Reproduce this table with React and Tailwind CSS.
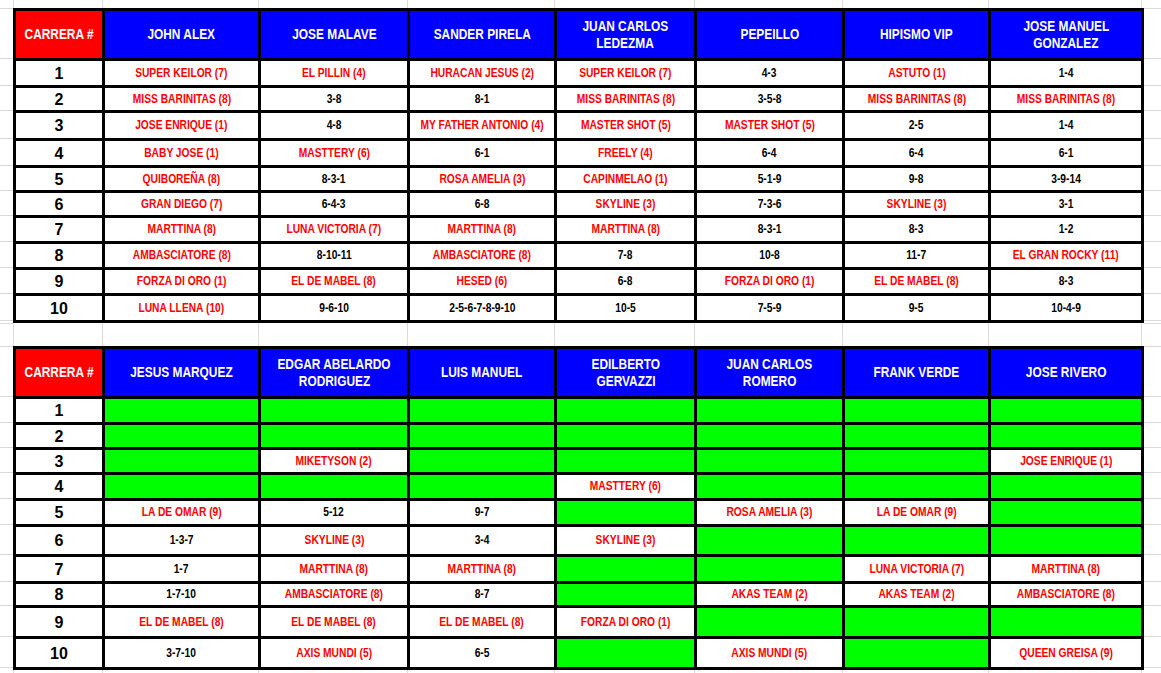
const G = null;

const table1 = {
  headers: [['CARRERA #'], ['JOHN ALEX'], ['JOSE MALAVE'], ['SANDER PIRELA'], ['JUAN CARLOS', 'LEDEZMA'], ['PEPEILLO'], ['HIPISMO VIP'], ['JOSE MANUEL', 'GONZALEZ']],
  rowsClass: 'grid-rows-[47px_24px_22px_25px_24px_22px_22px_23px_23px_23px_24px]',
  rows: [
    ['SUPER KEILOR (7)', 'EL PILLIN (4)', 'HURACAN JESUS (2)', 'SUPER KEILOR (7)', '4-3', 'ASTUTO (1)', '1-4'],
    ['MISS BARINITAS (8)', '3-8', '8-1', 'MISS BARINITAS (8)', '3-5-8', 'MISS BARINITAS (8)', 'MISS BARINITAS (8)'],
    ['JOSE ENRIQUE (1)', '4-8', 'MY FATHER ANTONIO (4)', 'MASTER SHOT (5)', 'MASTER SHOT (5)', '2-5', '1-4'],
    ['BABY JOSE (1)', 'MASTTERY (6)', '6-1', 'FREELY (4)', '6-4', '6-4', '6-1'],
    ['QUIBOREÑA (8)', '8-3-1', 'ROSA AMELIA (3)', 'CAPINMELAO (1)', '5-1-9', '9-8', '3-9-14'],
    ['GRAN DIEGO (7)', '6-4-3', '6-8', 'SKYLINE (3)', '7-3-6', 'SKYLINE (3)', '3-1'],
    ['MARTTINA (8)', 'LUNA VICTORIA (7)', 'MARTTINA (8)', 'MARTTINA (8)', '8-3-1', '8-3', '1-2'],
    ['AMBASCIATORE (8)', '8-10-11', 'AMBASCIATORE (8)', '7-8', '10-8', '11-7', 'EL GRAN ROCKY (11)'],
    ['FORZA DI ORO (1)', 'EL DE MABEL (8)', 'HESED (6)', '6-8', 'FORZA DI ORO (1)', 'EL DE MABEL (8)', '8-3'],
    ['LUNA LLENA (10)', '9-6-10', '2-5-6-7-8-9-10', '10-5', '7-5-9', '9-5', '10-4-9'],
  ],
  // left/right gridline segments, aligned to the row borders
  margin: ['h-[50px]', 'h-[27px]', 'h-[25px]', 'h-[28px]', 'h-[27px]', 'h-[25px]', 'h-[25px]', 'h-[26px]', 'h-[26px]', 'h-[26px]', 'h-[27px]', 'h-[3px]'],
};

const table2 = {
  headers: [['CARRERA #'], ['JESUS MARQUEZ'], ['EDGAR ABELARDO', 'RODRIGUEZ'], ['LUIS MANUEL'], ['EDILBERTO', 'GERVAZZI'], ['JUAN CARLOS', 'ROMERO'], ['FRANK VERDE'], ['JOSE RIVERO']],
  rowsClass: 'grid-rows-[47px_23px_22px_22px_23px_23px_27px_24px_21px_28px_28px]',
  rows: [
    [G, G, G, G, G, G, G],
    [G, G, G, G, G, G, G],
    [G, 'MIKETYSON (2)', G, G, G, G, 'JOSE ENRIQUE (1)'],
    [G, G, G, 'MASTTERY (6)', G, G, G],
    ['LA DE OMAR (9)', '5-12', '9-7', G, 'ROSA AMELIA (3)', 'LA DE OMAR (9)', G],
    ['1-3-7', 'SKYLINE (3)', '3-4', 'SKYLINE (3)', G, G, G],
    ['1-7', 'MARTTINA (8)', 'MARTTINA (8)', G, G, 'LUNA VICTORIA (7)', 'MARTTINA (8)'],
    ['1-7-10', 'AMBASCIATORE (8)', '8-7', G, 'AKAS TEAM (2)', 'AKAS TEAM (2)', 'AMBASCIATORE (8)'],
    ['EL DE MABEL (8)', 'EL DE MABEL (8)', 'EL DE MABEL (8)', 'FORZA DI ORO (1)', G, G, G],
    ['3-7-10', 'AXIS MUNDI (5)', '6-5', G, 'AXIS MUNDI (5)', G, 'QUEEN GREISA (9)'],
  ],
  margin: ['h-[50px]', 'h-[26px]', 'h-[25px]', 'h-[25px]', 'h-[26px]', 'h-[26px]', 'h-[30px]', 'h-[27px]', 'h-[24px]', 'h-[31px]', 'h-[31px]', 'h-[3px]'],
};

const colPitch = ['w-[89px]', 'w-[156px]', 'w-[149px]', 'w-[147px]', 'w-[140px]', 'w-[148px]', 'w-[146px]', 'w-[153px]'];

// the sheet font is a narrow one (Calibri); squeeze Liberation Sans to match its width
const Cell = ({ v }) => {
  if (v === G) return <div className="bg-[#00ff00]" />;
  const red = v.includes('(');
  return (
    <div className={`flex items-center justify-center bg-white text-[12.5px] font-bold leading-none whitespace-nowrap ${red ? 'text-[#ff0000]' : 'text-black'}`}>
      <span className="scale-x-[0.82]">{v}</span>
    </div>
  );
};

const Sheet = ({ data }) => (
  <div className={`grid grid-cols-[86px_153px_146px_144px_137px_145px_143px_150px] ${data.rowsClass} gap-[3px] bg-black p-[3px]`}>
    {data.headers.map((lines, i) => (
      <div
        key={i}
        className={`flex flex-col items-center justify-center whitespace-nowrap text-[14.5px] font-bold leading-[17px] text-white ${i === 0 ? 'bg-[#ff0000]' : 'bg-[#0000ff]'}`}
      >
        {lines.map((l) => (
          <span key={l} className="scale-x-[0.82]">{l}</span>
        ))}
      </div>
    ))}
    {data.rows.map((row, r) => [
      <div
        key={`n${r}`}
        className="flex items-center justify-center bg-white pt-[1px] text-[16px] font-bold leading-none text-black"
      >
        {r + 1}
      </div>,
      ...row.map((v, c) => <Cell key={`${r}-${c}`} v={v} />),
    ])}
  </div>
);

// vertical spreadsheet gridlines above, between and below the tables
const GridStrip = ({ h }) => (
  <div className={`flex ${h}`}>
    {colPitch.map((w, i) => (
      <div key={i} className={`${w} border-l border-[#dadada]`} />
    ))}
    <div className="w-[3px] border-l border-[#dadada]" />
  </div>
);

const Margin = ({ w }) => (
  <div className={`flex flex-col ${w}`}>
    <div className="h-[8px]" />
    {table1.margin.map((h, i) => (
      <div key={`a${i}`} className={`${h} border-t border-[#dadada]`} />
    ))}
    <div className="h-[23px] border-t border-[#dadada]" />
    {table2.margin.map((h, i) => (
      <div key={`b${i}`} className={`${h} border-t border-[#dadada]`} />
    ))}
    <div className="flex-1" />
  </div>
);

export default function App() {
  return (
    <div className="flex h-[673px] w-[1161px] overflow-hidden bg-white font-['Liberation_Sans',sans-serif]">
      <Margin w="w-[13px]" />
      <div className="flex w-[1131px] flex-col">
        <GridStrip h="h-[8px]" />
        <Sheet data={table1} />
        <GridStrip h="h-[23px]" />
        <Sheet data={table2} />
        <GridStrip h="flex-1" />
      </div>
      <Margin w="flex-1" />
    </div>
  );
}
